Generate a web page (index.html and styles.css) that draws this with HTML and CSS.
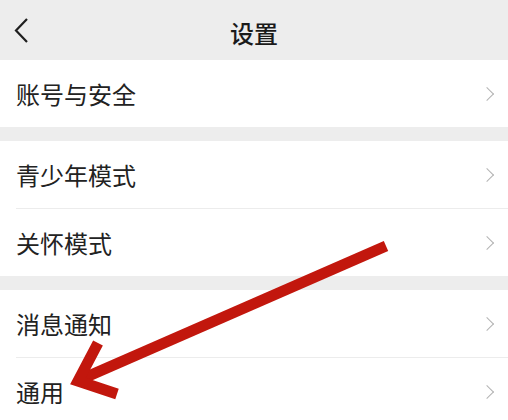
FILE: index.html
```html
<!DOCTYPE html>
<html lang="zh-CN">

<head>
    <meta charset="UTF-8">
    <meta name="viewport" content="width=device-width, initial-scale=1.0">
    <title>设置</title>
    <link rel="stylesheet" href="styles.css">
</head>

<body>
    <div class="page">
        <div class="nav-bar">
            <svg class="back" width="16" height="28" viewBox="0 0 16 28">
                <polyline points="13,2 2,13.5 13,25" fill="none" stroke="#1f1f1f" stroke-width="2.2" />
            </svg>
            <div class="nav-title">设置</div>
        </div>

        <div class="group">
            <div class="cell">
                <span class="cell-label">账号与安全</span>
                <span class="chevron"></span>
            </div>
        </div>

        <div class="group">
            <div class="cell">
                <span class="cell-label">青少年模式</span>
                <span class="chevron"></span>
            </div>
            <div class="cell">
                <span class="cell-label">关怀模式</span>
                <span class="chevron"></span>
            </div>
        </div>

        <div class="group">
            <div class="cell">
                <span class="cell-label">消息通知</span>
                <span class="chevron"></span>
            </div>
            <div class="cell">
                <span class="cell-label">通用</span>
                <span class="chevron"></span>
            </div>
        </div>

        <!-- 标注箭头 -->
        <svg class="mark" width="508" height="420" viewBox="0 0 508 420">
            <g stroke="#c2170d" stroke-width="11" fill="none" stroke-linejoin="miter">
                <line x1="386" y1="246" x2="84" y2="378" />
                <polyline points="98,343 78,381 117,394" />
            </g>
        </svg>
    </div>
</body>

</html>
```

FILE: styles.css
```css
body {
    margin: 0;
    padding: 0;
    background-color: #ededed;
    font-family: "Noto Sans CJK SC", "Noto Sans", sans-serif;
    color: #1f1f1f;
}

.page {
    position: relative;
    width: 508px;
    height: 420px;
    overflow: hidden;
}

.nav-bar {
    height: 60px;
    display: flex;
    align-items: center;
    justify-content: center;
    position: relative;
}

.back {
    position: absolute;
    left: 14px;
    top: 17px;
}

.nav-title {
    font-size: 24px;
    font-weight: 500;
    color: #1a1a1a;
    margin-top: 4px;
}

.group {
    background-color: #fff;
    margin-bottom: 14px;
}

.cell {
    height: 67px;
    display: flex;
    align-items: center;
    justify-content: space-between;
    padding: 0 14px 0 16px;
    position: relative;
}

.cell + .cell {
    border-top: 1px solid #ececec;
    margin-left: 16px;
    padding-left: 0;
}

.cell-label {
    font-size: 24px;
    color: #222;
}

.chevron {
    width: 9px;
    height: 9px;
    border-top: 1.6px solid #b3b3b3;
    border-right: 1.6px solid #b3b3b3;
    transform: rotate(45deg);
    margin-right: 2px;
}

.mark {
    position: absolute;
    left: 0;
    top: 0;
}
```
